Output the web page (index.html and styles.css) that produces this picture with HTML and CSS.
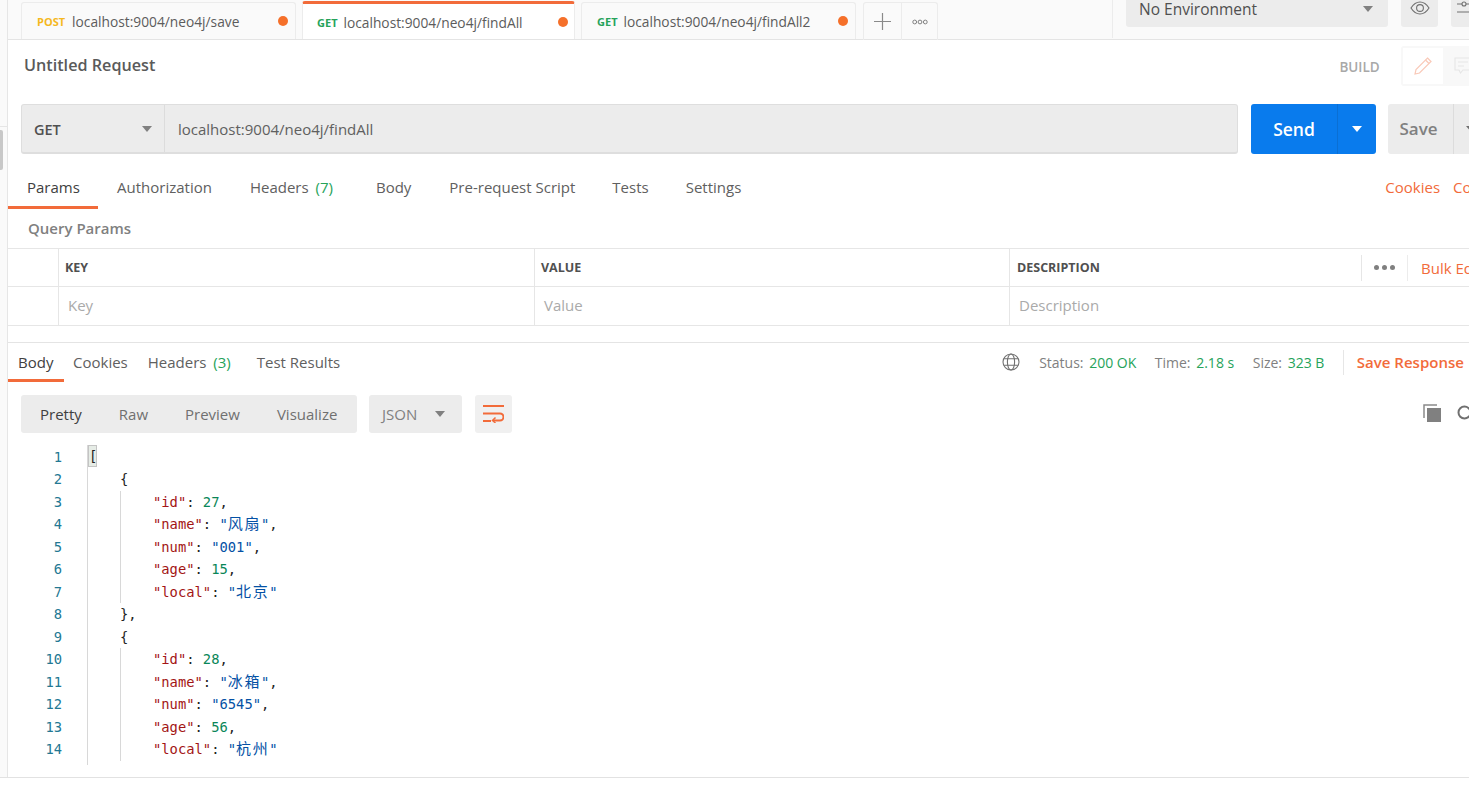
FILE: index.html
```html
<!DOCTYPE html>
<html lang="en">
<head>
    <meta charset="UTF-8">
    <meta name="viewport" content="width=device-width, initial-scale=1.0">
    <title>Untitled Request</title>
    <link rel="stylesheet" href="styles.css">
</head>
<body>
    <div class="app">
        <div class="sideStrip"><div class="sideLine"></div><div class="sideThumb"></div></div>
        <div class="workspace">
            <div class="tabBar">
                <div class="reqTab">
                    <span class="method post">POST</span><span class="tabUrl">localhost:9004/neo4j/save</span><span class="dot"></span>
                </div>
                <div class="reqTab active">
                    <span class="method get">GET</span><span class="tabUrl">localhost:9004/neo4j/findAll</span><span class="dot"></span>
                </div>
                <div class="reqTab">
                    <span class="method get">GET</span><span class="tabUrl">localhost:9004/neo4j/findAll2</span><span class="dot"></span>
                </div>
                <div class="tabTools">
                    <div class="toolBtn">
                        <svg width="17" height="17" viewBox="0 0 17 17"><path d="M8.5 0v17M0 8.5h17" stroke="#8a8a8a" stroke-width="1.2" fill="none"/></svg>
                    </div>
                    <div class="toolBtn">
                        <svg width="16" height="6" viewBox="0 0 16 6" fill="none" stroke="#808080"><circle cx="2.7" cy="3" r="1.9"/><circle cx="8" cy="3" r="1.9"/><circle cx="13.3" cy="3" r="1.9"/></svg>
                    </div>
                </div>
                <div class="envArea">
                    <div class="envSelect"><span>No Environment</span><i class="caret"></i></div>
                    <div class="envBtn">
                        <svg width="20" height="16" viewBox="0 0 20 16" fill="none" stroke="#707070" stroke-width="1.1"><path d="M1 8c2.500-4 5.500-6 9-6s6.500 2 9 6c-2.500 4-5.500 6-9 6s-6.500-2-9-6z"/><circle cx="10" cy="8" r="3.400"/></svg>
                    </div>
                    <div class="envBtn">
                        <svg width="20" height="16" viewBox="0 0 20 16" fill="none" stroke="#707070" stroke-width="1.1"><path d="M0 4h5M9 4h11M0 12h20"/><circle cx="7" cy="4" r="2"/></svg>
                    </div>
                </div>
            </div>

            <div class="titleRow">
                <h1>Untitled Request</h1>
                <div class="buildArea">
                    <span class="buildLabel">BUILD</span>
                    <div class="modeSwitch">
                        <div class="modeBtn on">
                            <svg width="18" height="18" viewBox="0 0 18 18" fill="none" stroke="#f9c9b8" stroke-width="1.2"><path d="M13.500 1l3.500 3.500L5.500 16 1 17l1-4.500z"/><path d="M11.500 3l3.500 3.500"/></svg>
                        </div>
                        <div class="modeBtn">
                            <svg width="18" height="18" viewBox="0 0 18 18" fill="none" stroke="#e6e6e6" stroke-width="1.100"><path d="M1 1h16v12H9l-2.500 3L5 13H1z"/><path d="M4 5h10M4 9h6"/></svg>
                        </div>
                    </div>
                </div>
            </div>

            <div class="urlRow">
                <div class="urlBox">
                    <div class="methodSelect"><span>GET</span><i class="caret"></i></div>
                    <div class="urlText">localhost:9004/neo4j/findAll</div>
                </div>
                <div class="sendBtn">
                    <span class="sendLabel">Send</span>
                    <span class="sendArrow"><i class="caret white"></i></span>
                </div>
                <div class="saveBtn">
                    <span class="saveLabel">Save</span>
                    <span class="saveArrow"><i class="caret dark"></i></span>
                </div>
            </div>

            <div class="reqTabs">
                <span class="subTab current params">Params</span>
                <span class="subTab auth">Authorization</span>
                <span class="subTab headers">Headers <em>(7)</em></span>
                <span class="subTab bodyTab">Body</span>
                <span class="subTab">Pre-request Script</span>
                <span class="subTab">Tests</span>
                <span class="subTab">Settings</span>
                <div class="reqLinks"><span>Cookies</span><span>Code</span></div>
            </div>

            <div class="queryTitle">Query Params</div>

            <div class="paramRow headRow">
                <div class="cell check"></div>
                <div class="cell wide">KEY</div>
                <div class="cell wide">VALUE</div>
                <div class="cell desc">
                    <span class="descText">DESCRIPTION</span>
                    <div class="descTools">
                        <span class="moreDots"><i></i><i></i><i></i></span>
                        <span class="bulkEdit">Bulk Edit</span>
                    </div>
                </div>
            </div>
            <div class="paramRow inputRow">
                <div class="cell check"></div>
                <div class="cell wide">Key</div>
                <div class="cell wide">Value</div>
                <div class="cell desc">Description</div>
            </div>

            <div class="respHead">
                <div class="respTabs">
                    <span class="respTab current">Body</span>
                    <span class="respTab">Cookies</span>
                    <span class="respTab">Headers <em>(3)</em></span>
                    <span class="respTab">Test Results</span>
                </div>
                <div class="respStatus">
                    <svg class="globe" width="18" height="18" viewBox="0 0 18 18" fill="none" stroke="#707070" stroke-width="1.100"><circle cx="9" cy="9" r="8"/><ellipse cx="9" cy="9" rx="3.600" ry="8"/><path d="M1.800 5.800h14.400M1.800 12.200h14.400"/></svg>
                    <span class="stat">Status: <b>200 OK</b></span>
                    <span class="stat">Time: <b>2.18 s</b></span>
                    <span class="stat">Size: <b>323 B</b></span>
                    <span class="saveResponse">Save Response</span>
                </div>
            </div>

            <div class="viewRow">
                <div class="viewModes">
                    <span class="current">Pretty</span>
                    <span>Raw</span>
                    <span>Preview</span>
                    <span>Visualize</span>
                </div>
                <div class="langSelect"><span>JSON</span><i class="caret"></i></div>
                <div class="wrapBtn">
                    <svg width="21" height="19" viewBox="0 0 21 19" fill="none" stroke="#f26b3a" stroke-width="2"><path d="M0 2h21M0 9.500h17a3.500 3.500 0 0 1 0 7h-7M0 17h8"/><path d="M12.500 13.500l-3 3 3 2.500" stroke-width="1.500"/></svg>
                </div>
                <div class="viewIcons">
                    <svg width="19" height="19" viewBox="0 0 19 19"><path d="M1 14V1h13" fill="none" stroke="#8a8a8a" stroke-width="1.500"/><rect x="4" y="4" width="14" height="14" fill="#808080"/></svg>
                    <svg width="18" height="18" viewBox="0 0 18 18" fill="none" stroke="#707070" stroke-width="2"><circle cx="7.500" cy="7.500" r="6"/><path d="M12 12l5 5"/></svg>
                </div>
            </div>

            <div class="editor">
                <div class="gutter">
                    <div>1</div><div>2</div><div>3</div><div>4</div><div>5</div><div>6</div><div>7</div>
                    <div>8</div><div>9</div><div>10</div><div>11</div><div>12</div><div>13</div><div>14</div>
                </div>
                <div class="code">
                    <div class="line"><span class="cursor">[</span></div>
                    <div class="line lv1">{</div>
                    <div class="block">
                        <div class="line"><span class="k">"id"</span>: <span class="n">27</span>,</div>
                        <div class="line"><span class="k">"name"</span>: <span class="s">"<span class="cjk">风扇</span>"</span>,</div>
                        <div class="line"><span class="k">"num"</span>: <span class="s">"001"</span>,</div>
                        <div class="line"><span class="k">"age"</span>: <span class="n">15</span>,</div>
                        <div class="line"><span class="k">"local"</span>: <span class="s">"<span class="cjk">北京</span>"</span></div>
                    </div>
                    <div class="line lv1">},</div>
                    <div class="line lv1">{</div>
                    <div class="block">
                        <div class="line"><span class="k">"id"</span>: <span class="n">28</span>,</div>
                        <div class="line"><span class="k">"name"</span>: <span class="s">"<span class="cjk">冰箱</span>"</span>,</div>
                        <div class="line"><span class="k">"num"</span>: <span class="s">"6545"</span>,</div>
                        <div class="line"><span class="k">"age"</span>: <span class="n">56</span>,</div>
                        <div class="line"><span class="k">"local"</span>: <span class="s">"<span class="cjk">杭州</span>"</span></div>
                    </div>
                </div>
            </div>
        </div>
    </div>
</body>
</html>
```

FILE: styles.css
```css
html, body{
    margin: 0;
    height: 100%;
    background-color: white;
    overflow: hidden;
    font-family: "Open Sans", "Noto Sans CJK SC", sans-serif;
    color: #505050;
}

.app{
    display: flex;
    height: 778px;
    border-bottom: 1px solid #e2e2e2;
    box-sizing: border-box;
    overflow: hidden;
}

.sideStrip{
    width: 7px;
    flex-shrink: 0;
    background-color: #fafafa;
    border-right: 1px solid #e6e6e6;
    padding-top: 126px;
}

.sideLine{
    height: 1px;
    margin-bottom: 3px;
    background-color: #e6e6e6;
}

.sideThumb{
    width: 3px;
    height: 40px;
    background-color: #c8c8c8;
    border-radius: 0 2px 2px 0;
}

.workspace{
    width: 1600px;
    flex-shrink: 0;
}

/* tab bar */
.tabBar{
    display: flex;
    height: 40px;
    box-sizing: border-box;
    padding: 2px 0 0 13px;
    background-color: #fafafa;
    border-bottom: 1px solid #e4e4e4;
}

.reqTab{
    display: flex;
    align-items: center;
    width: 275px;
    height: 37px;
    box-sizing: border-box;
    padding: 0 7px 0 15px;
    margin-right: 6px;
    border: 1px solid #ececec;
    border-bottom: none;
    border-radius: 3px 3px 0 0;
    font-size: 13.750px;
}

.reqTab.active{
    width: 273px;
    height: 38px;
    margin-top: -1px;
    padding: 1px 6px 0 14px;
    border-top: 3px solid #f26b3a;
    background-color: white;
}

.method{
    font-size: 11px;
    font-weight: 700;
    margin-right: 7px;
}

.post{
    color: #f5b81f;
}

.get{
    color: #26a35a;
    margin-right: 6px;
}

.tabUrl{
    flex: 1;
    color: #5c5c5c;
}

.dot{
    width: 10px;
    height: 10px;
    border-radius: 50%;
    background-color: #f5702a;
}

.tabTools{
    display: flex;
    height: 37px;
    margin-left: 1px;
    border: 1px solid #ececec;
    border-bottom: none;
    border-radius: 3px 3px 0 0;
}

.toolBtn{
    display: flex;
    align-items: center;
    justify-content: center;
    width: 35px;
}

.toolBtn:first-child{
    width: 37px;
    border-right: 1px solid #ececec;
}

.envArea{
    display: flex;
    height: 38px;
    margin: -2px 0 0 174px;
    padding-left: 13px;
    border-left: 1px solid #ececec;
}

.envSelect{
    display: flex;
    align-items: center;
    justify-content: space-between;
    width: 262px;
    height: 27px;
    box-sizing: border-box;
    padding: 0 15px 9px 13px;
    background-color: #ececec;
    border-radius: 0 0 3px 3px;
    font-size: 15.500px;
    color: #505050;
}

.envBtn{
    display: flex;
    align-items: flex-start;
    justify-content: center;
    width: 37px;
    height: 27px;
    margin-left: 13px;
    background-color: #ececec;
    border-radius: 0 0 3px 3px;
}

.envBtn + .envBtn{
    width: 60px;
    justify-content: flex-start;
    padding-left: 6px;
}

.caret{
    display: inline-block;
    width: 0;
    height: 0;
    border-left: 5px solid transparent;
    border-right: 5px solid transparent;
    border-top: 6px solid #808080;
}

.caret.white{
    border-top-color: white;
}

.caret.dark{
    border-top-color: #707070;
}

/* title */
.titleRow{
    display: flex;
    align-items: center;
    height: 51px;
    padding-left: 16px;
}

.titleRow h1{
    margin: 0 0 1px;
    font-size: 16.200px;
    font-weight: 600;
    color: #5a5a5a;
}

.buildArea{
    display: flex;
    align-items: center;
    margin-left: 1184px;
}

.buildLabel{
    font-size: 13.500px;
    font-weight: 600;
    color: #a8a8a8;
    margin: 2px 21px 0 0;
}

.modeSwitch{
    display: flex;
    padding: 2px;
    background-color: #f8f8f8;
    border-radius: 3px;
}

.modeBtn{
    display: flex;
    align-items: center;
    justify-content: center;
    width: 40px;
    height: 36px;
}

.modeBtn.on{
    background-color: white;
}

/* url row */
.urlRow{
    display: flex;
    height: 50px;
    margin: 13px 0 0 13px;
}

.urlBox{
    display: flex;
    width: 1217px;
    box-sizing: border-box;
    background-color: #ececec;
    border: 1px solid #dedede;
    border-bottom-width: 2px;
    border-radius: 3px;
    font-size: 15px;
}

.methodSelect{
    display: flex;
    align-items: center;
    justify-content: space-between;
    width: 143px;
    box-sizing: border-box;
    padding: 1px 12px 0;
    border-right: 1px solid #dcdcdc;
    font-size: 14.500px;
    font-weight: 600;
    color: #505050;
}

.urlText{
    padding-left: 13px;
    line-height: 49px;
    color: #606060;
}

.sendBtn{
    display: flex;
    width: 125px;
    height: 50px;
    margin-left: 13px;
    background-color: #097bed;
    border-radius: 3px;
    color: white;
    font-size: 17.500px;
    font-weight: 600;
}

.sendLabel{
    width: 86px;
    line-height: 50px;
    text-align: center;
    border-right: 1px solid #0a6fd4;
}

.sendArrow, .saveArrow{
    display: flex;
    align-items: center;
    justify-content: center;
    flex: 1;
}

.saveBtn{
    display: flex;
    width: 100px;
    height: 50px;
    margin-left: 12px;
    background-color: #ececec;
    border-radius: 3px;
    color: #808080;
    font-size: 17px;
    font-weight: 600;
}

.saveLabel{
    width: 61px;
    padding-right: 4px;
    line-height: 50px;
    text-align: center;
    border-right: 1px solid #dcdcdc;
}

/* request tabs */
.reqTabs{
    display: flex;
    height: 42px;
    margin-top: 12px;
    font-size: 15px;
    line-height: 42px;
}

.subTab{
    margin-right: 37px;
    color: #606060;
    white-space: nowrap;
}

.subTab em, .respTab em{
    font-style: normal;
    color: #26a35a;
    margin-left: 3px;
}

.subTab.params{
    width: 52px;
    margin-right: 19px;
    padding: 0 19px;
    border-bottom: 3px solid #f26b3a;
    height: 40px;
    color: #404040;
}

.subTab.auth{
    margin-right: 38px;
}

.subTab.headers{
    margin-right: 43px;
}

.subTab.bodyTab{
    margin-right: 38px;
}

.reqLinks{
    display: flex;
    gap: 13px;
    margin-left: 607px;
    color: #f26b3a;
}

.queryTitle{
    height: 40px;
    padding-left: 20px;
    line-height: 40px;
    font-size: 15px;
    font-weight: 600;
    color: #808080;
    box-sizing: border-box;
}

/* params table */
.paramRow{
    display: flex;
    height: 38.500px;
    box-sizing: border-box;
    border-bottom: 1px solid #e6e6e6;
}

.headRow{
    height: 39px;
    border-top: 1px solid #e6e6e6;
    font-size: 12.500px;
    font-weight: 700;
    color: #505050;
}

.inputRow{
    font-size: 15px;
    color: #aaaaaa;
}

.cell{
    display: flex;
    align-items: center;
    box-sizing: border-box;
    padding-left: 7px;
    border-right: 1px solid #e6e6e6;
}

.inputRow .cell{
    padding: 0 0 1px 9px;
}

.check{
    width: 51px;
}

.wide{
    width: 476px;
    padding-left: 6px;
}

.wide + .wide{
    width: 475px;
}

.desc{
    width: 590px;
    border-right: none;
}

.descText{
    width: 344px;
}

.descTools{
    display: flex;
    align-items: center;
    height: 26px;
    border-left: 1px solid #e6e6e6;
}

.moreDots{
    display: flex;
    gap: 3px;
    padding: 0 12px;
}

.moreDots i{
    width: 5px;
    height: 5px;
    border-radius: 50%;
    background-color: #808080;
}

.bulkEdit{
    padding-left: 13px;
    border-left: 1px solid #ececec;
    font-size: 15px;
    font-weight: 400;
    line-height: 26px;
    color: #f26b3a;
    white-space: nowrap;
}

/* response */
.respHead{
    display: flex;
    height: 40px;
    box-sizing: border-box;
    margin-top: 16px;
    border-top: 1px solid #e4e4e4;
}

.respTabs{
    display: flex;
    gap: 20px;
    height: 39px;
    font-size: 15px;
    line-height: 38px;
    color: #606060;
    white-space: nowrap;
}

.respTab.current{
    width: 36px;
    padding: 0 10px;
    height: 36px;
    border-bottom: 3px solid #f26b3a;
    color: #404040;
    margin-right: -11px;
}

.respTab:nth-child(4){
    margin-left: 6px;
}

.respStatus{
    display: flex;
    align-items: center;
    height: 39px;
    margin-left: 662px;
    font-size: 14px;
    color: #808080;
    white-space: nowrap;
}

.globe{
    margin-right: 19px;
}

.stat{
    margin-right: 18.500px;
}

.stat b{
    font-weight: 400;
    color: #26a35a;
    margin-left: 2px;
}

.saveResponse{
    padding-left: 13px;
    border-left: 1px solid #e6e6e6;
    line-height: 25px;
    font-size: 15px;
    font-weight: 600;
    color: #f26b3a;
}

.viewRow{
    display: flex;
    height: 38px;
    margin: 13px 0 0 13px;
    font-size: 15px;
}

.viewModes{
    display: flex;
    align-items: center;
    gap: 37px;
    width: 336px;
    box-sizing: border-box;
    padding-left: 19px;
    background-color: #ececec;
    border-radius: 3px;
    color: #707070;
}

.viewModes .current{
    color: #404040;
}

.langSelect{
    display: flex;
    align-items: center;
    justify-content: space-between;
    width: 93px;
    box-sizing: border-box;
    margin-left: 12px;
    padding: 0 17px 0 13px;
    background-color: #ececec;
    border-radius: 3px;
    color: #808080;
}

.wrapBtn{
    display: flex;
    align-items: center;
    justify-content: center;
    width: 37px;
    margin-left: 13px;
    background-color: #f0f0f0;
    border-radius: 3px;
}

.viewIcons{
    display: flex;
    align-items: center;
    gap: 15px;
    margin-left: 911px;
}

/* code */
.editor{
    display: flex;
    height: 320px;
    margin-top: 12px;
    font-family: "DejaVu Sans Mono", "Noto Sans CJK SC", monospace;
    font-size: 13.800px;
    line-height: 22.500px;
    color: #222222;
    overflow: hidden;
}

.gutter{
    width: 54px;
    padding-top: 1px;
    text-align: right;
    color: #237893;
    flex-shrink: 0;
}

.code{
    margin-left: 25px;
    padding-top: 1px;
    border-left: 1px solid #d8d8d8;
}

.line{
    height: 22.500px;
    white-space: nowrap;
}

.cursor{
    display: inline-block;
    width: 9px;
    height: 22px;
    margin-top: -1px;
    line-height: 20px;
    background-color: #e6ece6;
    border: 1px solid #c4c4c4;
    box-sizing: border-box;
    vertical-align: top;
}

.lv1{
    padding-left: 32px;
}

.block{
    margin-left: 32px;
    padding-left: 32px;
    border-left: 1px solid #d8d8d8;
}

.k{
    color: #a31515;
}

.n{
    color: #098658;
}

.s{
    color: #0451a5;
}

.cjk{
    font-size: 15px;
    line-height: 20px;
    letter-spacing: 1.600px;
}
```
